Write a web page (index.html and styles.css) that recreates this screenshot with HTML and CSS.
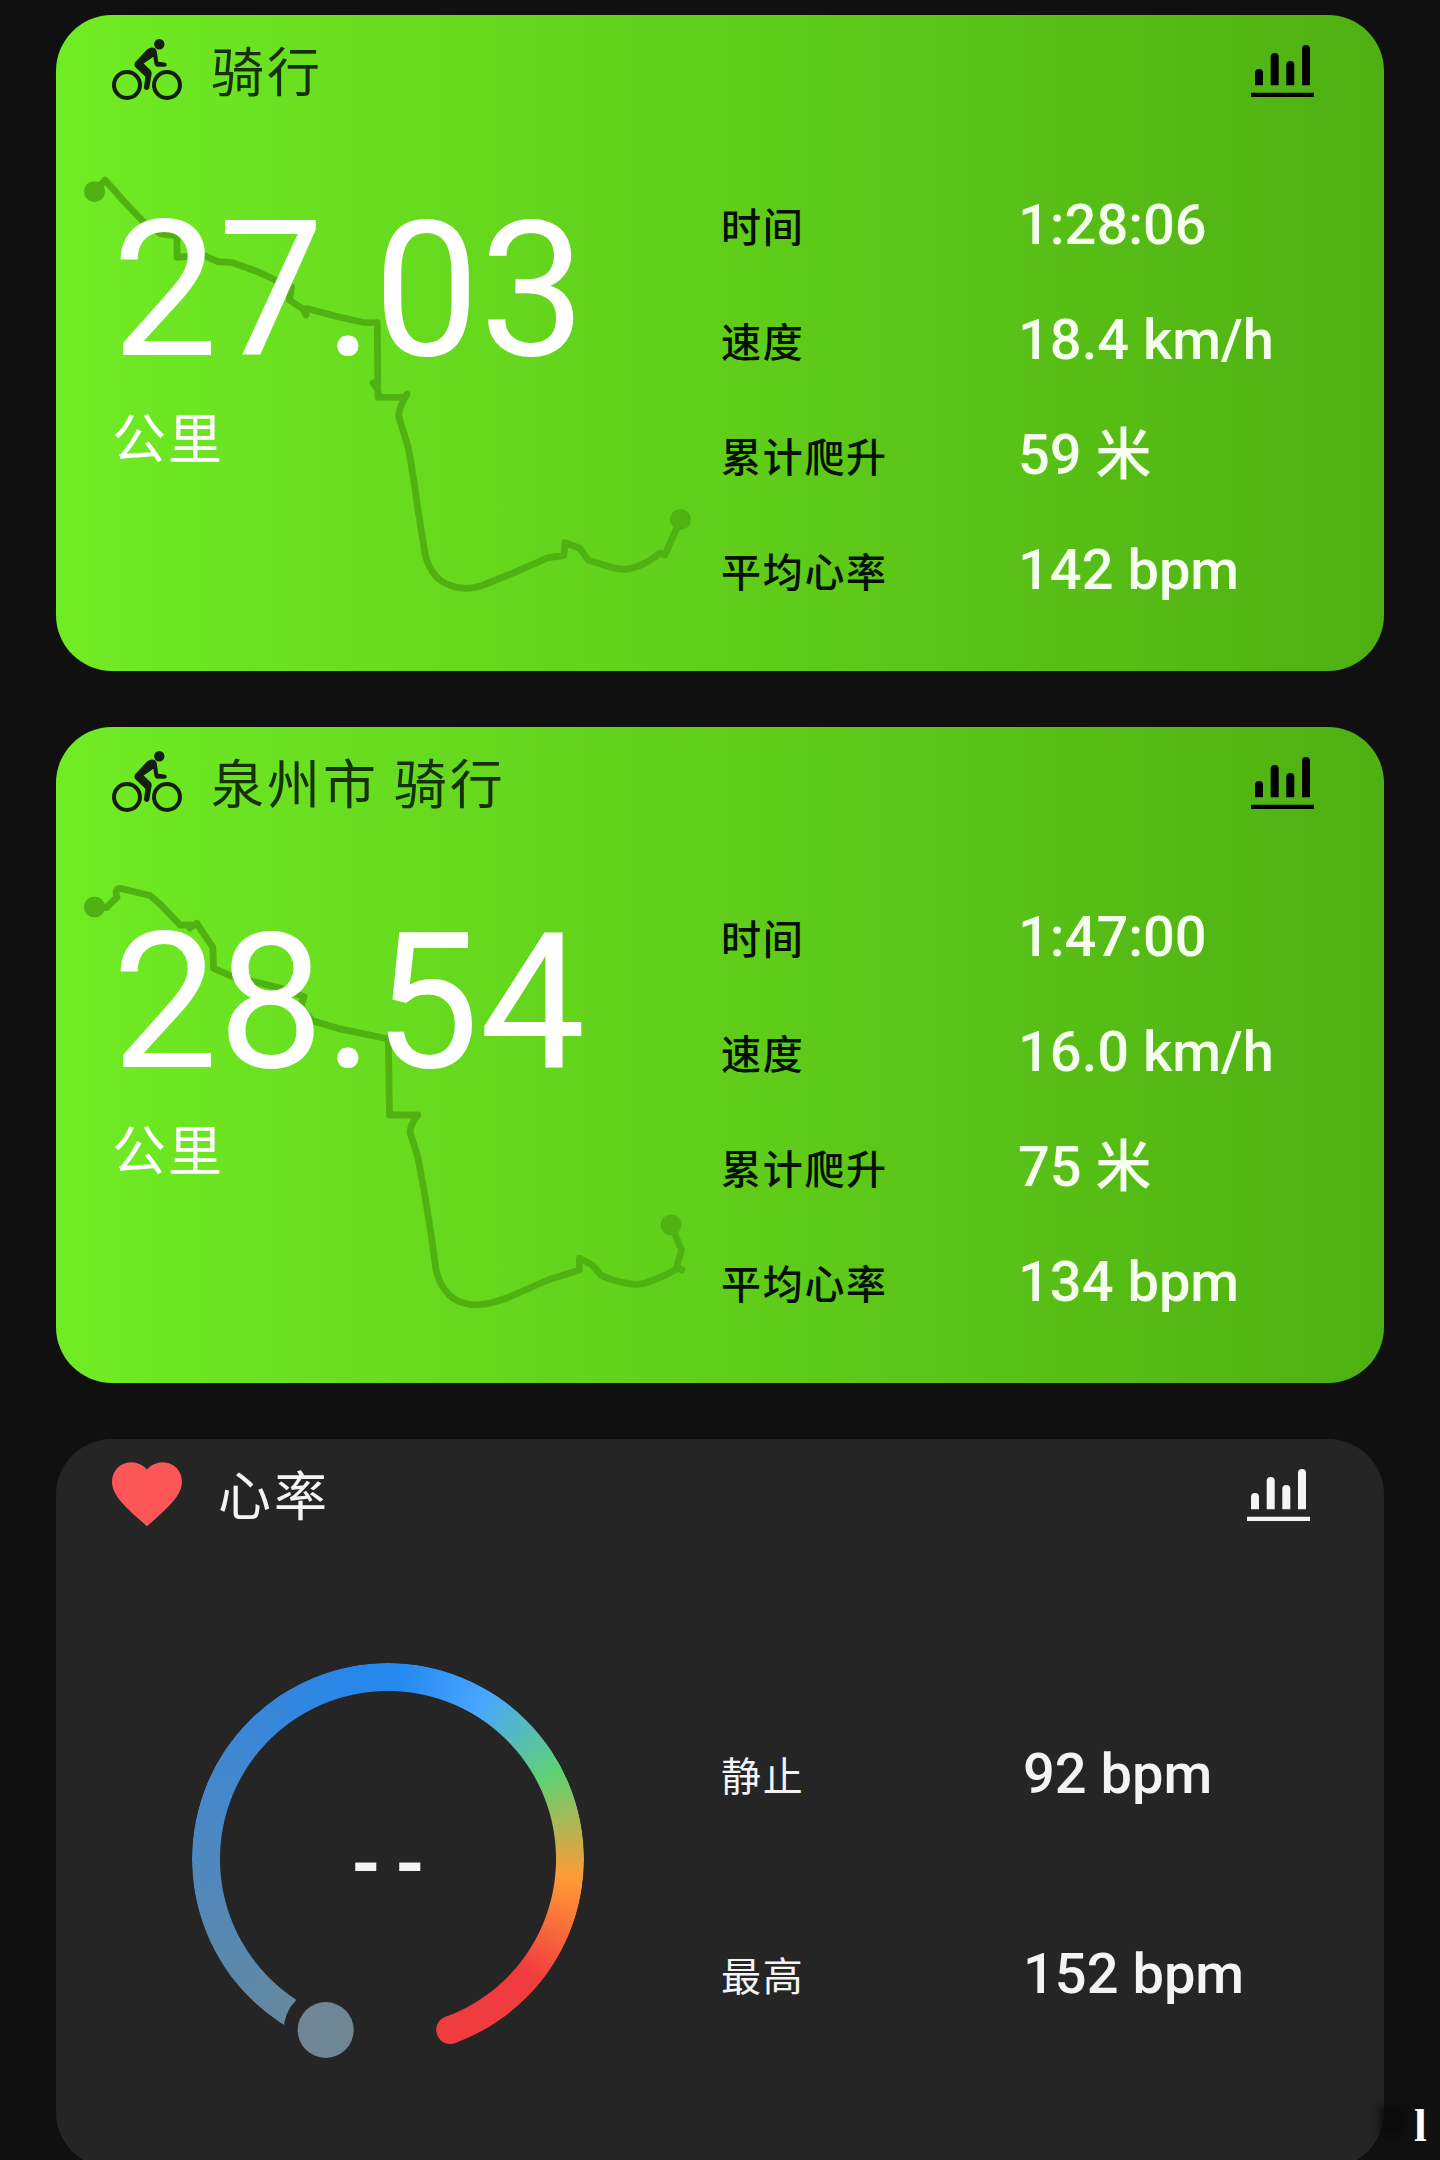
FILE: index.html
```html
<!DOCTYPE html>
<html lang="zh-CN">
<head>
<meta charset="utf-8">
<title>骑行</title>
<link rel="stylesheet" href="styles.css">
</head>
<body>
<svg class="defs" width="0" height="0" aria-hidden="true">
  <symbol id="bike" viewBox="0 0 70 62">
    <circle cx="15" cy="47" r="13" fill="none" stroke="currentColor" stroke-width="4"/>
    <circle cx="55" cy="47" r="13" fill="none" stroke="currentColor" stroke-width="4"/>
    <circle cx="47.3" cy="6.2" r="5.2" fill="currentColor"/>
    <path fill="currentColor" d="M35.3 11.3Q39.5 8.2 43.3 10.6Q44.8 12 45 15L46.2 23.8L52.5 24.5Q55 24.8 54.8 26.8Q54.6 28.7 52.5 28.7L45.2 28.7Q42.8 28.2 42.3 25.6L41.4 18.8L31.6 25.6L38.6 32.2Q40 33.8 39.6 36L37.3 50Q36.6 52.2 34.4 52Q31.8 51.6 32 49L33.4 38.8L23.4 29.2Q21.4 26.6 23.4 24Z"/>
  </symbol>
  <symbol id="bars" viewBox="0 0 63 53">
    <path fill="currentColor" d="M0 47.7h63V52H0zM4 40.3V28a4 4 0 0 1 8 0V40.3zM19.7 40.3V12a4 4 0 0 1 8 0V40.3zM35.3 40.3V20a4 4 0 0 1 8 0V40.3zM51 40.3V4a4 4 0 0 1 8 0V40.3z"/>
  </symbol>
</svg>
<main class="feed">
  <section class="card ride">
    <svg class="route" viewBox="0 0 1328 656">
      <circle cx="38.5" cy="176.7" r="10.5"/><circle cx="624.4" cy="504.5" r="10.5"/>
      <path d="M38.5 176.7L49 165L71.3 190L88.2 207.7L105 219L121 221V242.3L147 240L161.8 246.7L176.6 247.7L201.8 256.7L220.8 265.7L235.5 271.7L233.4 285L247 294L250 300L251 293.5L281.8 301.7L307 307.3L321.3 307.7L321.8 370L317 368L322 375V382.3H349L351 379Q342 394 342.8 401.7L352.5 433.3Q359 470 361.7 493.3L369.3 540Q371 548 376.5 556.7Q383 567 395.4 570.7Q408 576 424.9 571L456.4 558.3L492.2 542.7L507.8 540.7L509 527.7L523.8 533.3L532.2 545L555.3 552.3Q564 555 572.2 554Q583 552 593.2 545.7L604 538L608.8 540L624.4 505"/>
    </svg>
    <header class="head">
      <svg class="bike"><use href="#bike"/></svg>
      <h2 class="title">骑行</h2>
      <svg class="bars"><use href="#bars"/></svg>
    </header>
    <div class="body">
      <div class="distance"><div class="number">27.03</div><div class="unit">公里</div></div>
      <dl class="metrics">
        <dt>时间</dt><dd>1:28:06</dd>
        <dt>速度</dt><dd>18.4 km/h</dd>
        <dt>累计爬升</dt><dd>59 米</dd>
        <dt>平均心率</dt><dd>142 bpm</dd>
      </dl>
    </div>
  </section>
  <section class="card ride">
    <svg class="route" viewBox="0 0 1328 656">
      <circle cx="38.5" cy="180" r="10.5"/><circle cx="615" cy="498" r="10.5"/>
      <path d="M38.5 180L50.3 180.7L61 170.3Q58 161 65 161.5L94.5 168.7L105 178L124 198L134 198L134 201L140.8 196.3L156.8 220.3L157.6 241.3L176.6 249.7L225 261.3L248 269.7L244.7 279.7L256.5 293.7L281.8 301.3L332.3 312L333.5 388H361.7Q353 400 354.2 406.3L361.7 429.7L368 463L374.4 503L379.8 541.3Q382 554 389 563Q396 573 408 576.3Q424 581 450 571.3L492 553L523.4 543V531.3L536.4 538L544.8 548Q554 553 568 555.7Q581 559 591 555.5L610 548L622 541L626 543L620.6 539.7L625.6 523L615 498"/>
    </svg>
    <header class="head">
      <svg class="bike"><use href="#bike"/></svg>
      <h2 class="title">泉州市 骑行</h2>
      <svg class="bars"><use href="#bars"/></svg>
    </header>
    <div class="body">
      <div class="distance"><div class="number">28.54</div><div class="unit">公里</div></div>
      <dl class="metrics">
        <dt>时间</dt><dd>1:47:00</dd>
        <dt>速度</dt><dd>16.0 km/h</dd>
        <dt>累计爬升</dt><dd>75 米</dd>
        <dt>平均心率</dt><dd>134 bpm</dd>
      </dl>
    </div>
  </section>
  <section class="card heart">
    <header class="head">
      <svg class="heart-icon" viewBox="2 3 20 18.5"><path d="M12 21.35l-1.45-1.32C5.4 15.36 2 12.28 2 8.5 2 5.42 4.42 3 7.5 3c1.74 0 3.41.81 4.5 2.09C13.09 3.81 14.76 3 16.5 3 19.58 3 22 5.42 22 8.5c0 3.78-3.4 6.86-8.55 11.54L12 21.35z"/></svg>
      <h2 class="title">心率</h2>
      <svg class="bars"><use href="#bars"/></svg>
    </header>
    <div class="body">
      <div class="gauge">
        <div class="ring"></div>
        <svg class="ends" viewBox="0 0 392 392">
          <circle class="cap" cx="258.2" cy="367" r="14"/>
          <circle class="gap" cx="133.7" cy="367" r="42"/>
          <circle class="knob" cx="133.7" cy="367" r="28"/>
        </svg>
        <span class="reading">- -</span>
      </div>
      <dl class="metrics">
        <dt>静止</dt><dd>92 bpm</dd>
        <dt>最高</dt><dd>152 bpm</dd>
      </dl>
    </div>
  </section>
</main>
<div class="smudge"></div>
<div class="mark">l</div>
</body>
</html>
```
FILE: styles.css
```css
* { box-sizing: border-box; margin: 0; padding: 0; }
body {
  position: relative;
  height: 2160px;
  overflow: hidden;
  background: #101010;
  font-family: Roboto, "Noto Sans CJK SC", sans-serif;
}
.defs { position: absolute; }
.feed {
  display: flex;
  flex-direction: column;
  gap: 56px;
  padding: 15px 56px 0;
}
.card {
  position: relative;
  flex: none;
  height: 656px;
  border-radius: 56px;
}
.ride { background: linear-gradient(90deg, #70ec24 0%, #68dc1f 25%, #60ce1a 50%, #4fb012 100%); }
.heart { height: 729px; background: #252525; }

.head {
  position: relative;
  display: flex;
  align-items: center;
  height: 112px;
  padding: 0 70px 0 56px;
}
.bike { width: 70px; height: 62px; margin: -4px 29px 0 0; color: #151d10; }
.title {
  margin-top: -4px;
  font: 400 53px/80px "Noto Sans CJK SC", sans-serif;
  letter-spacing: 3px;
  color: #173008;
}
.bars { width: 63px; height: 53px; margin-left: auto; color: #000; }

.route { position: absolute; inset: 0; width: 1328px; height: 656px; }
.route circle { fill: #50b212; }
.route path { fill: none; stroke: #50b212; stroke-width: 6.8; stroke-linejoin: round; }

.body { position: relative; display: grid; grid-template-columns: 665px 1fr; }
.distance { padding: 69px 0 0 56px; color: #fff; }
.number { font-size: 188.5px; line-height: 189px; }
.unit {
  margin-top: 21px;
  font: 400 54px/60px "Noto Sans CJK SC", sans-serif;
  letter-spacing: 2px;
}
.metrics {
  display: grid;
  grid-template-columns: 297px 1fr;
  grid-auto-rows: 115px;
  padding-top: 41px;
}
.metrics dt {
  font: 500 40px/115px "Noto Sans CJK SC", sans-serif;
  letter-spacing: 1.7px;
  color: #041000;
  white-space: nowrap;
}
.metrics dd { font-size: 56px; font-weight: 500; line-height: 114px; color: #f6ffee; white-space: nowrap; }

.heart .head { padding-right: 74px; }
.heart .title { color: #f4f4f4; }
.heart .bars { color: #f4f4f4; }
.heart-icon { width: 70px; height: 65px; margin: -1px 36px 0 0; fill: #fc5656; }
.heart .metrics { grid-auto-rows: 200px; padding-top: 123px; grid-template-columns: 302px 1fr; }
.heart .metrics dt, .heart .metrics dd { line-height: 200px; color: #f4f4f4; }
.heart .metrics dt { font-weight: 400; }

.gauge {
  position: relative;
  display: flex;
  align-items: center;
  justify-content: center;
  width: 392px;
  height: 392px;
  margin: 112px 0 0 136px;
}
.ring {
  position: absolute;
  inset: 0;
  border-radius: 50%;
  background: conic-gradient(from 200deg, #6f8794 0deg, #5f88a8 25deg, #4f88c0 70deg, #3d87d4 110deg, #2686ea 150deg, #268af2 165deg, #4aa6ff 191deg, #5fd271 223deg, #ff9b36 256deg, #f03c3e 289deg, #f03c3e 320deg, transparent 320deg);
  -webkit-mask: radial-gradient(circle, transparent 167.5px, #000 168.5px);
  mask: radial-gradient(circle, transparent 167.5px, #000 168.5px);
}
.ends { position: absolute; inset: 0; width: 392px; height: 392px; overflow: visible; }
.cap { fill: #f03c3e; }
.gap { fill: #252525; }
.knob { fill: #6f8794; }
.reading { position: relative; margin-top: 10px; font-size: 76px; font-weight: 700; line-height: 90px; word-spacing: -5px; color: #f4f4f4; }

.smudge {
  position: absolute;
  left: 1380px;
  top: 2106px;
  width: 26px;
  height: 30px;
  background: #0b0b0b;
  filter: blur(5px);
}
.mark {
  position: absolute;
  left: 1414px;
  top: 2101px;
  font: 700 46px/50px "Liberation Serif", serif;
  color: #fff;
}
```
